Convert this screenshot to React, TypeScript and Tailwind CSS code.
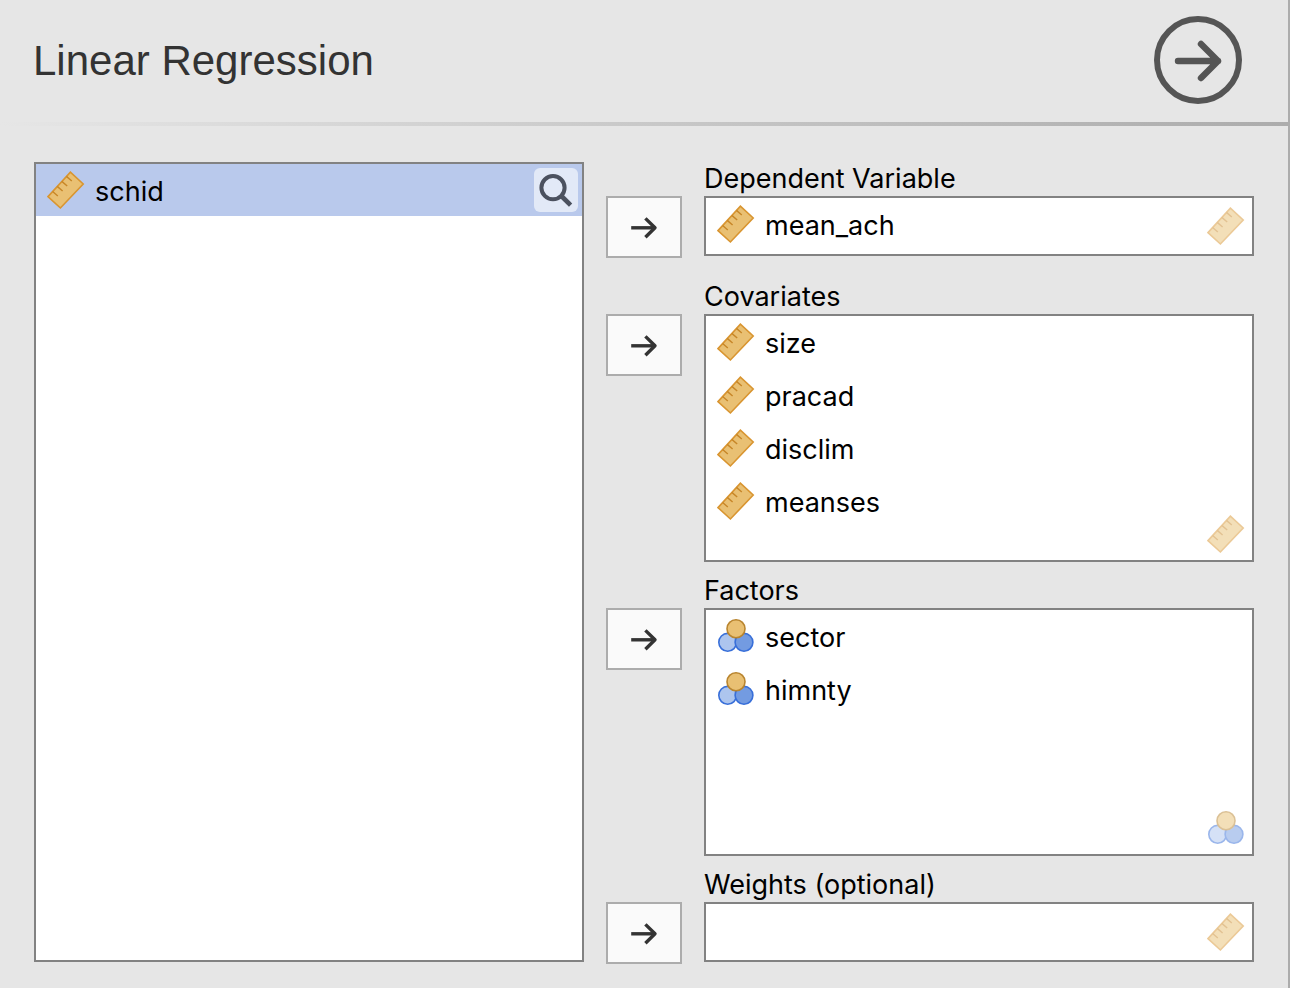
import React from "react";

type Kind = "continuous" | "nominal";

function RulerIcon() {
  return (
    <svg viewBox="0 0 40 40" className="size-10 shrink-0" fill="none" aria-hidden="true">
      <path d="M2 26.6 24.4 2.2 37.2 14 14.4 38Z" fill="#e9c073" stroke="#d99530" strokeWidth="1.6" />
      <path d="m20.4 6.4 5.4 4.6M15.8 11.4l5.4 4.6M11.2 16.4l5.4 4.6M6.6 21.4l5.2 4.6" stroke="#c78628" strokeWidth="1.4" />
    </svg>
  );
}

function NominalIcon() {
  return (
    <svg viewBox="0 0 40 40" className="size-10 shrink-0" fill="none" strokeWidth="1.6" aria-hidden="true">
      <circle cx="11.7" cy="26.3" r="8.9" fill="#adc5ee" stroke="#386fd9" />
      <circle cx="28" cy="26.3" r="8.9" fill="#739be1" stroke="#386fd9" />
      <circle cx="20" cy="12.8" r="9" fill="#e9c073" stroke="#b9852f" />
    </svg>
  );
}

function KindIcon({ kind }: { kind: Kind }) {
  return kind === "nominal" ? <NominalIcon /> : <RulerIcon />;
}

function Variable({ name, kind }: { name: string; kind: Kind }) {
  return (
    <li className="flex h-[52px] items-center gap-[9px] px-[10px]">
      <KindIcon kind={kind} />
      <span className="pt-1 text-[27px] leading-8">{name}</span>
    </li>
  );
}

interface TargetProps {
  id: string;
  label: string;
  kind: Kind;
  names: string[];
  tall?: boolean;
}

function Target({ id, label, kind, names, tall }: TargetProps) {
  return (
    <section className="flex items-start gap-[22px]">
      <button
        type="button"
        aria-label={`Move to ${label}`}
        className="mt-[34px] flex h-[62px] w-[76px] shrink-0 items-center justify-center border-2 border-[#acacac] bg-[#fafafa]"
      >
        <svg viewBox="0 0 28 24" className="h-6 w-7" fill="none" stroke="#333" strokeWidth="3.4" aria-hidden="true">
          <path d="M1.2 12.8H25" />
          <path d="m15.4 3.4 9.6 9.4-9.6 9.4" strokeLinejoin="round" />
        </svg>
      </button>
      <div className="min-w-0 flex-1">
        <h2 id={id} className="text-[27px] leading-[34px]">
          {label}
        </h2>
        <div className={`relative border-2 border-[#828282] bg-white ${tall ? "h-[248px]" : "h-[60px]"}`}>
          <ul aria-labelledby={id} className="flex flex-col gap-px">
            {names.map((name) => (
              <Variable key={name} name={name} kind={kind} />
            ))}
          </ul>
          <span className={`absolute right-[6px] opacity-50 ${tall ? "bottom-[6px]" : "bottom-2"}`}>
            <KindIcon kind={kind} />
          </span>
        </div>
      </div>
    </section>
  );
}

export default function App() {
  return (
    <main className="flex min-h-screen flex-col border-r-2 border-[#acacac] bg-[#e6e6e6] font-['Inter',sans-serif] text-black">
      <header className="flex h-[122px] items-center justify-between pr-[46px] pl-[33px]">
        <h1 className="font-['Liberation_Sans',sans-serif] text-[42px] leading-[50px] text-[#333]">Linear Regression</h1>
        <button type="button" aria-label="Close options" className="mb-[2px] shrink-0">
          <svg viewBox="0 0 88 88" className="size-[88px]" fill="none" stroke="#555" strokeWidth="6" aria-hidden="true">
            <circle cx="44" cy="44" r="41" />
            <path d="M24 45h40M47 28l17 17-17 17" strokeWidth="6.4" strokeLinecap="round" strokeLinejoin="round" />
          </svg>
        </button>
      </header>
      <div className="h-1 bg-linear-to-r from-[#e6e6e6] to-[#acacac]" />
      <div className="grid grid-cols-[550fr_648fr] gap-[22px] px-[34px] pt-9 pb-6">
        <div className="mb-[2px] border-2 border-[#828282] bg-white">
          <div className="flex h-[52px] items-center justify-between bg-[#b9c9ec] pr-1">
            <ul aria-label="Available variables">
              <Variable name="schid" kind="continuous" />
            </ul>
            <button
              type="button"
              aria-label="Search variables"
              className="flex size-11 items-center justify-center rounded-md bg-[#e2e9f7]"
            >
              <svg viewBox="0 0 44 44" className="size-11" fill="none" stroke="#4b515f" strokeWidth="4" aria-hidden="true">
                <circle cx="19" cy="19.7" r="11.6" />
                <path d="m27.4 28 9.2 9.2" strokeWidth="4.6" />
              </svg>
            </button>
          </div>
        </div>
        <div className="flex flex-col gap-3">
          <div className="pb-[10px]">
            <Target id="dependent" label="Dependent Variable" kind="continuous" names={["mean_ach"]} />
          </div>
          <Target
            id="covariates"
            label="Covariates"
            kind="continuous"
            names={["size", "pracad", "disclim", "meanses"]}
            tall
          />
          <Target id="factors" label="Factors" kind="nominal" names={["sector", "himnty"]} tall />
          <Target id="weights" label="Weights (optional)" kind="continuous" names={[]} />
        </div>
      </div>
    </main>
  );
}
